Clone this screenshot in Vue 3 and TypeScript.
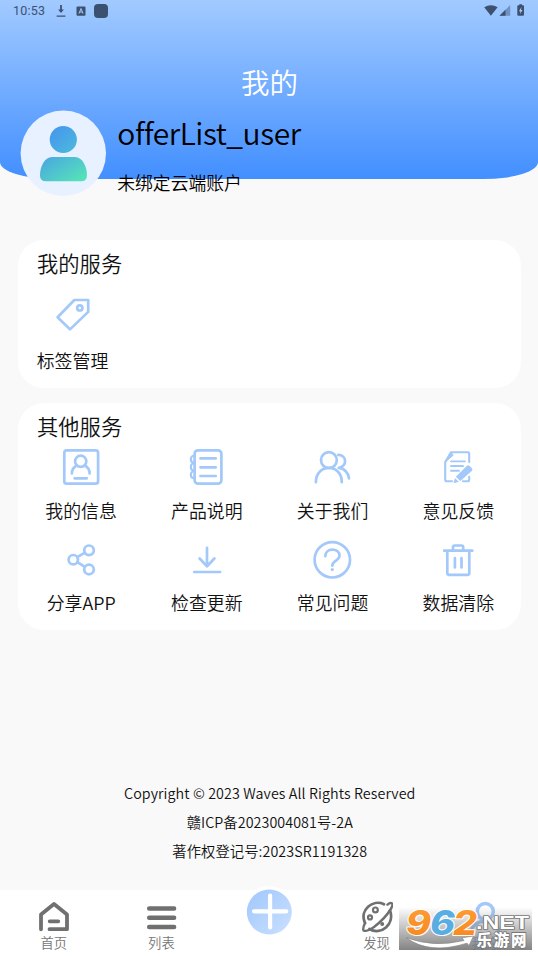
<script setup lang="ts">
interface Service {
  label: string
  icon: string
}

const services: Service[] = [
  { label: '我的信息', icon: 'info' },
  { label: '产品说明', icon: 'book' },
  { label: '关于我们', icon: 'people' },
  { label: '意见反馈', icon: 'feedback' },
  { label: '分享APP', icon: 'share' },
  { label: '检查更新', icon: 'update' },
  { label: '常见问题', icon: 'question' },
  { label: '数据清除', icon: 'trash' },
]
</script>

<template>
  <div class="page">
    <header class="hero">
      <div class="status">
        <span class="time">10:53</span>
        <svg class="s-download" width="10" height="14" viewBox="0 0 10 14" fill="#3c5170">
          <path d="M4.100 1h1.800v4.600h2L5 9 2.100 5.600h2zM.6 11.500h8.800v1.300H.6z" />
        </svg>
        <svg class="s-letter" width="10" height="10" viewBox="0 0 10 10">
          <rect x=".5" y=".5" width="9" height="9.200" rx="1" fill="#3c5170" />
          <path d="M3 7.600 5 2.500l2 5.100M3.700 6h2.600" fill="none" stroke="#a5c9ff" stroke-width="1" />
        </svg>
        <span class="s-block"></span>
        <span class="grow"></span>
        <svg width="42" height="14" viewBox="0 0 42 14">
          <path d="M.2 3.200Q6.900-.6 13.600 3.200L6.900 11.700z" fill="#3c5170" />
          <path d="M15.500 11.700 26.200 1v10.700z" fill="#3c5170" fill-opacity=".45" />
          <path d="M15.500 11.700 21.500 5.700v6z" fill="#3c5170" />
          <path d="M33.300 2.300q0-1 1-1h1v-1h2.700v1h1q1 0 1 1v8.500q0 1-1 1h-4.700q-1 0-1-1z" fill="#3c5170" />
          <path d="M37.500 3 35 7.200h1.500L36 10l2.500-4H37z" fill="#b4d1fb" />
        </svg>
      </div>
      <h1>我的</h1>
      <div class="profile">
        <svg class="avatar" width="86" height="86" viewBox="0 0 86 86">
          <defs>
            <linearGradient id="headFill" x1="0" y1="0" x2="1" y2="1">
              <stop offset="0" stop-color="#4693ee" /><stop offset="1" stop-color="#4cbbdc" />
            </linearGradient>
            <linearGradient id="bodyFill" x1="0" y1="0" x2="1" y2=".8">
              <stop offset="0" stop-color="#49a4e4" /><stop offset="1" stop-color="#55e2b8" />
            </linearGradient>
          </defs>
          <circle cx="43.300" cy="43.300" r="42.700" fill="#e8f1ff" />
          <circle cx="43.300" cy="29.500" r="13.600" fill="url(#headFill)" />
          <path d="M32 46.900h23c7.500 0 12 9.500 12 18.500q0 5.800-5.800 5.800H25.800q-5.800 0-5.800-5.800c0-9 4.500-18.500 12-18.500z" fill="url(#bodyFill)" />
        </svg>
        <div class="who">
          <div class="name">offerList_user</div>
          <div class="bind">未绑定云端账户</div>
        </div>
      </div>
    </header>

    <main>
      <section class="card mine">
        <h2>我的服务</h2>
        <div class="tag">
          <svg class="icon" viewBox="0 0 40 40">
            <path d="M21.300 5h13.900v11.900L17 34.400 4.600 22.300z" />
            <circle cx="26.800" cy="12.900" r="2.600" />
          </svg>
          <span class="label">标签管理</span>
        </div>
      </section>

      <section class="card other">
        <h2>其他服务</h2>
        <div class="grid">
          <div v-for="s in services" :key="s.icon" class="cell">
            <svg class="icon" viewBox="0 0 40 40">
              <g v-if="s.icon === 'info'">
                <rect x="3.300" y="3.300" width="33.800" height="33.400" rx="2.500" />
                <circle cx="19.700" cy="14.300" r="5.600" />
                <path d="M10.900 26.500q0-5.500 4.800-8M28.600 26.500q0-5.500-4.800-8M13.600 31.300h12.200" />
              </g>
              <g v-else-if="s.icon === 'book'">
                <rect x="7.600" y="3.300" width="26.800" height="33.400" rx="3.500" />
                <path d="M13.500 11.400h15.200M13.500 20.300h15.200M13.500 29h15.200" />
                <path d="M7.600 8.500c-5 .5-5 7 0 7.500-5 .5-5 7.500 0 8-5 .5-5 7 0 7.500" stroke-width="2.200" />
              </g>
              <g v-else-if="s.icon === 'people'">
                <circle cx="16.900" cy="13.100" r="7.900" />
                <path d="M3.900 35.200c0-19 25.900-19 25.900 0M26.200 7.800c8.800 0 9.300 11.500.6 13.100 5.600.4 9.600 5 10.200 10.400" />
              </g>
              <g v-else-if="s.icon === 'feedback'">
                <path d="M25 34.300h4.700q1.500 0 1.500-1.500v-3M31.200 15V6.800q0-1.500-1.500-1.500H13L7.200 15v17.800q0 1.500 1.500 1.500H14" stroke-width="2.100" />
                <path d="M13 14.400h13.900M13 19h12M13 23.700h8" stroke-width="1.900" />
                <path d="M13 5.300 7.400 15l7.400-6.500z" fill="#a3c8fa" stroke-width="1" />
                <path d="m17.800 29.800 10.900-10.800q1.500-1.500 3 0l2 2q1.500 1.500 0 3L22.400 34.100zM16.900 31l3.900 3.800-5.200 1.400z" fill="#a3c8fa" stroke="none" />
              </g>
              <g v-else-if="s.icon === 'share'">
                <circle cx="12.300" cy="19.700" r="4.700" />
                <circle cx="28" cy="10.300" r="4.800" />
                <circle cx="28" cy="29.500" r="4.800" />
                <path d="m16.300 17.200 7.600-4.500M16.300 22.200l7.600 4.700" />
              </g>
              <path v-else-if="s.icon === 'update'" d="M20 7.800v18.500M12.600 18.500l7.400 7.800 7.400-7.800M7.300 32h25.800" />
              <g v-else-if="s.icon === 'question'">
                <circle cx="20.300" cy="19.800" r="17.700" />
                <path d="M13.300 16.200c0-9 14.200-8.600 14.200-.4 0 5-7.200 4.600-7.200 9.900" />
                <circle cx="20.300" cy="29.500" r="1.600" fill="#a3c8fa" stroke="none" />
              </g>
              <path v-else d="M6.200 10.700h28.100M15 10.700V7.200q0-1.700 1.700-1.700h6.800q1.700 0 1.700 1.700v3.500M9.300 10.700v22.400q0 1.800 1.800 1.800h18.400q1.800 0 1.800-1.800V10.700M16.900 18.200v9.300M23.500 18.200v9.300" />
            </svg>
            <span class="label">{{ s.label }}</span>
          </div>
        </div>
      </section>
    </main>

    <footer class="legal">
      <p class="l1">Copyright © 2023 Waves All Rights Reserved</p>
      <p class="l2">赣ICP备2023004081号-2A</p>
      <p class="l2">著作权登记号:2023SR1191328</p>
    </footer>

    <nav class="tabs">
      <div class="tab">
        <svg class="nav-icon" viewBox="0 0 32 32" stroke-width="3.800">
          <path d="M3 28.300V13.400L16 2.900l13 10.500v14.800H11.500M11.700 20.300h8.600" />
        </svg>
        <span>首页</span>
      </div>
      <div class="tab">
        <svg class="nav-icon" viewBox="0 0 32 32" stroke-width="4.500">
          <path d="M4.200 7.400h24.900M4.200 16.700h24.900M4.200 26h24.900" />
        </svg>
        <span>列表</span>
      </div>
      <div class="tab">
        <svg class="plus" width="52" height="52" viewBox="0 0 52 52">
          <defs>
            <linearGradient id="plusFill" x1="0" y1="0" x2="1" y2="1">
              <stop offset="0" stop-color="#9fc7fc" /><stop offset="1" stop-color="#cbe0ff" />
            </linearGradient>
          </defs>
          <circle cx="26" cy="26" r="26" fill="#fff" />
          <circle cx="26.300" cy="26" r="22.500" fill="url(#plusFill)" />
          <path d="M11 25.300h32.300M27.100 9.500v32" stroke="#fff" stroke-width="4.200" stroke-linecap="round" />
        </svg>
      </div>
      <div class="tab">
        <svg class="nav-icon" viewBox="0 0 32 32" stroke-width="2.800">
          <path d="M4 22C-2 9 12-2 23 3.200M8.500 28C20 35 34 23 29 9.500" />
          <path d="M4 22q-2.500 5.500-1.500 7.300Q5 31.500 13 26 24 17.500 29.500 8.500 32.500 3.500 30.800 2.300 29 1.400 26.500 3.700" stroke-width="2.400" />
          <circle cx="14.400" cy="8.900" r="2.400" stroke-width="2.200" />
          <circle cx="9" cy="16.400" r="2" stroke-width="2.200" />
          <circle cx="21.200" cy="23" r="2" fill="#707070" stroke="none" />
        </svg>
        <span>发现</span>
      </div>
      <div class="tab active">
        <svg class="nav-icon" viewBox="0 0 32 32" stroke-width="3.500">
          <circle cx="17.300" cy="10.500" r="8" />
          <path d="M3.500 30c1-13 26-13 27 0" />
        </svg>
        <span>我的</span>
      </div>
    </nav>

    <div class="watermark">
      <svg width="133" height="43" viewBox="0 0 133 43">
        <defs>
          <linearGradient id="orange" x1="0" y1="0" x2="0" y2="1">
            <stop offset="0" stop-color="#ff9f36" /><stop offset="1" stop-color="#f6861d" />
          </linearGradient>
        </defs>
        <g class="digits" stroke="#fff" stroke-width="2" paint-order="stroke" stroke-linejoin="round">
          <text x="7" y="27.500" textLength="25" lengthAdjust="spacingAndGlyphs" fill="url(#orange)">9</text>
          <text x="31" y="27.500" textLength="25" lengthAdjust="spacingAndGlyphs" fill="#58aee3">6</text>
          <text x="54" y="27.500" textLength="24" lengthAdjust="spacingAndGlyphs" fill="url(#orange)">2</text>
        </g>
        <path d="M7 30.500Q34 41 65 33.500l-2-2.700 11.500-1.800-4.500 9.500-2-2.300Q30 48 7 30.500z" fill="#fff" stroke="#888" stroke-width=".7" />
        <g fill="#fff" stroke="#777" stroke-width="1.600" paint-order="stroke" stroke-linejoin="round">
          <text class="net" x="77" y="21.500" textLength="53" lengthAdjust="spacingAndGlyphs">.NET</text>
          <text class="cn" x="77.500" y="38.500" textLength="50">乐游网</text>
        </g>
      </svg>
    </div>
  </div>
</template>

<style>
body {
  background: #f9f9f9;
}
</style>

<style scoped>
.page {
  position: relative;
  display: flex;
  flex-direction: column;
  width: 538px;
  height: 956px;
  overflow: hidden;
  background: #f9f9f9;
  color: #111;
  font-family: "Noto Sans CJK SC", sans-serif;
  font-weight: 350;
}
h1, h2, p { margin: 0; font-weight: inherit; }
.hero {
  flex: none;
  height: 179px;
  border-radius: 0 0 54px 54px / 0 0 17px 17px;
  background: linear-gradient(#a2caff, #428fff);
}
.status {
  display: flex;
  align-items: center;
  box-sizing: border-box;
  height: 22px;
  padding: 0 12px 0 13px;
}
.time {
  width: 43px;
  font: 400 12.500px/22px Roboto, sans-serif;
  letter-spacing: .25px;
  color: #3c5170;
}
.s-download { margin-right: 10px; }
.s-letter { margin-right: 8px; }
.s-block { width: 14px; height: 14px; border-radius: 4px; background: #3c5170; }
.grow { flex: 1; }
h1 {
  margin-top: 39px;
  padding-left: 1px;
  text-align: center;
  color: #fff;
  font-size: 28.500px;
  line-height: 42px;
}
.profile { display: flex; padding: 7px 20px 0; }
.avatar { flex: none; overflow: visible; }
.who { margin-left: 11.300px; color: #000; }
.name {
  margin-top: 2px;
  font-size: 30px;
  line-height: 40px;
  letter-spacing: -.45px;
  font-variant-ligatures: none;
  white-space: nowrap;
}
.bind { margin-top: 17px; font-size: 17.800px; line-height: 26px; }
main { padding: 61px 17px 0 18px; }
.card { box-sizing: border-box; border-radius: 26px; background: #fff; }
.mine { height: 148px; padding: 7px 19px; }
.other { height: 227px; margin-top: 15px; padding-top: 7px; }
.other h2 { padding-left: 19px; }
h2 { font-size: 21.300px; line-height: 32px; }
.tag { display: flex; flex-direction: column; align-items: center; width: 71px; margin-top: 16px; }
.tag .label { margin-top: 12px; }
.icon {
  flex: none;
  width: 40px;
  height: 40px;
  fill: none;
  stroke: #a3c8fa;
  stroke-width: 2.700;
  stroke-linecap: round;
  stroke-linejoin: round;
}
.label { font-size: 17.900px; line-height: 26px; white-space: nowrap; }
.grid { display: grid; grid-template-columns: repeat(4, 1fr); margin-top: 5px; row-gap: 16px; }
.cell { display: flex; flex-direction: column; align-items: center; height: 77px; }
.cell .label { margin-top: 10px; padding-left: .5px; }
.cell:nth-child(n + 5) .label { margin-top: 9px; }
.legal {
  display: flex;
  flex-direction: column;
  align-items: center;
  margin-top: 149px;
  padding-left: 1.500px;
  font-size: 14.300px;
  line-height: 28.800px;
}
.l1 { letter-spacing: .09px; }
.l2 { letter-spacing: .07px; }
.tabs {
  display: grid;
  grid-template-columns: repeat(5, 1fr);
  height: 66px;
  margin-top: auto;
  background: #fff;
  color: #777;
}
.tab {
  display: flex;
  flex-direction: column;
  align-items: center;
  padding-top: 11px;
  font-size: 13.300px;
  line-height: 20px;
}
.nav-icon { width: 32px; height: 32px; fill: none; stroke: #707070; stroke-linecap: round; stroke-linejoin: round; }
.active { color: #86b7fa; }
.active .nav-icon { stroke: #a3c8fa; }
.plus { flex: none; margin-top: -15px; }
.watermark {
  position: absolute;
  right: 6px;
  bottom: 6px;
  height: 43px;
  background: linear-gradient(rgba(110, 110, 110, 0), rgba(110, 110, 110, .85));
}
.watermark svg { display: block; overflow: visible; }
.digits { font: italic 800 34px Inter, sans-serif; }
.net { font: 800 18px "Liberation Sans", sans-serif; }
.cn { font: 900 15.500px "Noto Sans CJK SC", sans-serif; }
</style>
